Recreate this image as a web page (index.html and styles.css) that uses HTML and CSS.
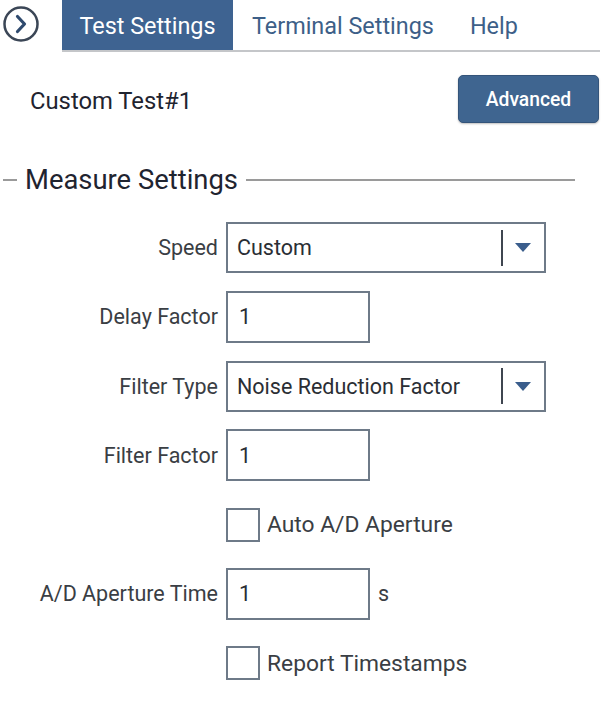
FILE: index.html
```html
<!DOCTYPE html>
<html>
<head>
<meta charset="utf-8">
<link rel="stylesheet" href="styles.css">
</head>
<body>
<div class="page">
  <header class="topbar">
    <div class="nav-toggle">
      <svg width="36" height="36" viewBox="0 0 36 36">
        <circle cx="18" cy="18" r="16.5" fill="none" stroke="#3b4656" stroke-width="2.5"/>
        <path d="M14.5 10.5 L21.5 18 L14.5 25.5" fill="none" stroke="#2f4a6e" stroke-width="3.2" stroke-linecap="round" stroke-linejoin="round"/>
      </svg>
    </div>
    <nav class="tabs">
      <div class="tab active">Test Settings</div>
      <div class="tab">Terminal Settings</div>
      <div class="tab">Help</div>
    </nav>
  </header>

  <div class="title-row">
    <div class="test-name">Custom Test#1</div>
    <button class="btn-advanced">Advanced</button>
  </div>

  <div class="section-title">
    <span class="dash"></span>
    <span class="section-text">Measure Settings</span>
    <span class="rule"></span>
  </div>

  <div class="form">
    <div class="label">Speed</div>
    <div class="control">
      <div class="select">
        <span class="select-value">Custom</span>
        <span class="select-sep"></span>
        <span class="select-arrow"></span>
      </div>
    </div>

    <div class="label">Delay Factor</div>
    <div class="control"><div class="input">1</div></div>

    <div class="label">Filter Type</div>
    <div class="control">
      <div class="select">
        <span class="select-value">Noise Reduction Factor</span>
        <span class="select-sep"></span>
        <span class="select-arrow"></span>
      </div>
    </div>

    <div class="label">Filter Factor</div>
    <div class="control"><div class="input">1</div></div>

    <div class="label"></div>
    <div class="control">
      <div class="checkbox"></div>
      <span class="check-label">Auto A/D Aperture</span>
    </div>

    <div class="label">A/D Aperture Time</div>
    <div class="control">
      <div class="input">1</div>
      <span class="unit">s</span>
    </div>

    <div class="label"></div>
    <div class="control">
      <div class="checkbox"></div>
      <span class="check-label">Report Timestamps</span>
    </div>
  </div>
</div>
</body>
</html>
```

FILE: styles.css
```css
html, body {
  margin: 0;
  padding: 0;
  background: #ffffff;
}

body {
  font-family: Roboto, "Liberation Sans", sans-serif;
  color: #23272e;
}

.page {
  width: 605px;
}

.topbar {
  display: flex;
  align-items: flex-start;
  height: 52px;
}

.nav-toggle {
  width: 62px;
  height: 44px;
  display: flex;
  align-items: center;
  padding-left: 3px;
  padding-top: 4px;
  box-sizing: border-box;
}

.tabs {
  display: flex;
  width: 538px;
  height: 52px;
  border-bottom: 2px solid #c4c6c9;
  box-sizing: border-box;
}

.tab {
  height: 50px;
  display: flex;
  align-items: center;
  padding: 2px 18px 0 18px;
  font-size: 23.4px;
  color: #3d5f88;
  box-sizing: border-box;
}

.tab.active {
  background: #3e6391;
  color: #ffffff;
  width: 171px;
  justify-content: center;
  padding: 2px 0 0 0;
  margin-right: 1px;
}

.title-row {
  display: flex;
  align-items: center;
  justify-content: space-between;
  margin-top: 23px;
  padding-left: 30px;
  padding-right: 6px;
}

.test-name {
  font-size: 23.8px;
  color: #1f2430;
  padding-top: 3px;
}

.btn-advanced {
  width: 141px;
  height: 48px;
  background: #3f6590;
  border: 1px solid #34547a;
  border-radius: 5px;
  color: #ffffff;
  font-family: Roboto, "Liberation Sans", sans-serif;
  font-size: 19.3px;
  font-weight: 500;
  box-shadow: 0 1px 2px rgba(0,0,0,0.25);
}

.section-title {
  display: flex;
  align-items: center;
  margin-top: 41px;
  padding-left: 3px;
  width: 572px;
}

.dash {
  width: 14px;
  height: 2px;
  background: #9a9a9a;
}

.section-text {
  font-size: 27.4px;
  color: #1f2430;
  padding: 0 8px 0 8px;
  line-height: 32px;
}

.rule {
  flex: 1;
  height: 2px;
  background: #9a9a9a;
}

.form {
  display: grid;
  grid-template-columns: 218px 1fr;
  column-gap: 8px;
  row-gap: 18.3px;
  grid-auto-rows: 51px;
  margin-top: 26px;
}

.label {
  display: flex;
  align-items: center;
  justify-content: flex-end;
  font-size: 21.5px;
  color: #3a3e44;
}

.control {
  display: flex;
  align-items: center;
}

.select {
  width: 320px;
  height: 51px;
  border: 2px solid #6e7a88;
  box-sizing: border-box;
  display: flex;
  align-items: center;
}

.select-value {
  flex: 1;
  padding-left: 9px;
  font-size: 21.5px;
  color: #2a2e34;
}

.select-sep {
  width: 2px;
  height: 36px;
  background: #3f4650;
}

.select-arrow {
  width: 0;
  height: 0;
  border-left: 8px solid transparent;
  border-right: 8px solid transparent;
  border-top: 9px solid #3a5d8c;
  margin: 0 13px 0 12px;
}

.input {
  width: 144px;
  height: 52px;
  border: 2px solid #6e7a88;
  box-sizing: border-box;
  display: flex;
  align-items: center;
  padding-left: 11px;
  font-size: 21.5px;
  color: #2a2e34;
}

.unit {
  margin-left: 8px;
  font-size: 21.5px;
  color: #3a3e44;
}

.checkbox {
  width: 34px;
  height: 34px;
  border: 2px solid #6e7a88;
  box-sizing: border-box;
}

.check-label {
  margin-left: 7px;
  font-size: 22.8px;
  color: #3a3e44;
}
```
